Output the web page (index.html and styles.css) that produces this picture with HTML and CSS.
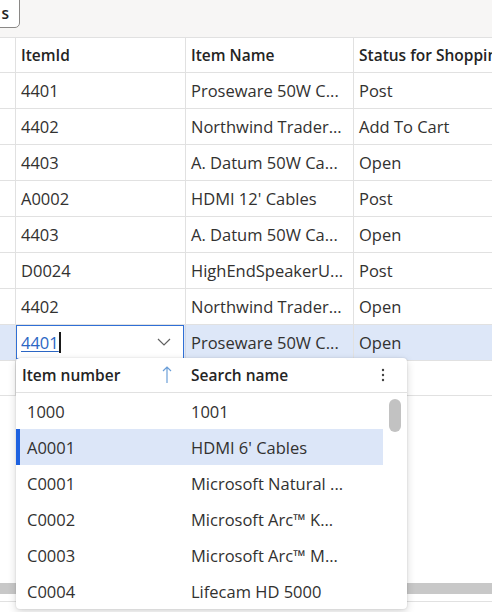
FILE: index.html
```html
<!DOCTYPE html>
<html>
<head>
<meta charset="utf-8">
<link rel="stylesheet" href="styles.css">
</head>
<body>
<div class="page">
  <div class="toolbar">
    <button class="tbtn">s</button>
  </div>
  <div class="grid">
    <div class="row head">
      <div class="c c0"></div>
      <div class="c c1">ItemId</div>
      <div class="c c2">Item Name</div>
      <div class="c c3">Status for Shoppin</div>
    </div>
    <div class="row"><div class="c c0"></div><div class="c c1">4401</div><div class="c c2">Proseware 50W C...</div><div class="c c3">Post</div></div>
    <div class="row"><div class="c c0"></div><div class="c c1">4402</div><div class="c c2">Northwind Trader...</div><div class="c c3">Add To Cart</div></div>
    <div class="row"><div class="c c0"></div><div class="c c1">4403</div><div class="c c2">A. Datum 50W Ca...</div><div class="c c3">Open</div></div>
    <div class="row"><div class="c c0"></div><div class="c c1">A0002</div><div class="c c2">HDMI 12' Cables</div><div class="c c3">Post</div></div>
    <div class="row"><div class="c c0"></div><div class="c c1">4403</div><div class="c c2">A. Datum 50W Ca...</div><div class="c c3">Open</div></div>
    <div class="row"><div class="c c0"></div><div class="c c1">D0024</div><div class="c c2">HighEndSpeakerU...</div><div class="c c3">Post</div></div>
    <div class="row"><div class="c c0"></div><div class="c c1">4402</div><div class="c c2">Northwind Trader...</div><div class="c c3">Open</div></div>
    <div class="row sel">
      <div class="c c0"></div>
      <div class="c c1 editcell">
        <div class="input"><span class="val">4401</span><span class="caret"></span>
          <svg class="chev" width="14" height="8" viewBox="0 0 14 8"><path d="M1 1 L7 7 L13 1" fill="none" stroke="#616161" stroke-width="1.2"/></svg>
        </div>
      </div>
      <div class="c c2">Proseware 50W C...</div>
      <div class="c c3">Open</div>
    </div>
    <div class="row empty"><div class="c c0"></div><div class="c c1"></div><div class="c c2"></div><div class="c c3"></div></div>
  </div>
  <div class="hscroll"></div>
  <div class="footer"></div>

  <div class="dropdown">
    <div class="dhead">
      <div class="dh1">Item number</div>
      <div class="sortarrow">
        <svg width="10" height="18" viewBox="0 0 10 18"><path d="M5 1 V17 M1 5 L5 1 L9 5" fill="none" stroke="#6c9fd8" stroke-width="1.2"/></svg>
      </div>
      <div class="dh2">Search name</div>
      <div class="more">
        <svg width="4" height="14" viewBox="0 0 4 14"><circle cx="2" cy="2" r="1.2" fill="#424242"/><circle cx="2" cy="7" r="1.2" fill="#424242"/><circle cx="2" cy="12" r="1.2" fill="#424242"/></svg>
      </div>
    </div>
    <div class="dbody">
      <div class="dlist">
        <div class="drow"><div class="d1">1000</div><div class="d2">1001</div></div>
        <div class="drow hl"><div class="d1">A0001</div><div class="d2">HDMI 6' Cables</div></div>
        <div class="drow"><div class="d1">C0001</div><div class="d2">Microsoft Natural ...</div></div>
        <div class="drow"><div class="d1">C0002</div><div class="d2">Microsoft Arc™ K...</div></div>
        <div class="drow"><div class="d1">C0003</div><div class="d2">Microsoft Arc™ M...</div></div>
        <div class="drow"><div class="d1">C0004</div><div class="d2">Lifecam HD 5000</div></div>
      </div>
      <div class="vscroll"><div class="thumb"></div></div>
    </div>
  </div>
</div>
</body>
</html>
```

FILE: styles.css
```css
* { box-sizing: border-box; }
html, body { margin: 0; padding: 0; }
body {
  font-family: "Open Sans", "Noto Sans", "Liberation Sans", sans-serif;
  font-size: 16.5px;
  color: #323130;
  background: #ffffff;
}
.page {
  position: relative;
  width: 492px;
  height: 612px;
  overflow: hidden;
  display: flex;
  flex-direction: column;
}
.toolbar {
  height: 37px;
  flex: none;
  background: #f7f6f5;
  display: flex;
  align-items: flex-start;
}
.tbtn {
  margin-left: -20px;
  margin-top: -6px;
  width: 40px;
  height: 34px;
  background: #ffffff;
  border: 1px solid #8a8886;
  border-radius: 5px;
  font-family: inherit;
  font-size: 15.5px;
  font-weight: 600;
  color: #242424;
  text-align: right;
  padding: 4px 10px 0 0;
}
.grid {
  flex: 1;
  border-top: 1px solid #e1e1e1;
  overflow: hidden;
}
.row {
  display: flex;
  height: 36px;
  border-bottom: 1px solid #e1e1e1;
}
.row.head { height: 35px; font-weight: 600; font-size: 15.5px; color: #242424; }
.c {
  border-right: 1px solid #e1e1e1;
  padding: 0 6px;
  display: flex;
  align-items: center;
  white-space: nowrap;
  overflow: hidden;
}
.c0 { width: 16px; flex: none; padding: 0; }
.c1 { width: 170px; flex: none; padding-left: 5px; }
.c2 { width: 168px; flex: none; padding-left: 5px; }
.c3 { flex: 1; border-right: none; padding-left: 5px; }
.row.sel { background: #dde7f8; }
.editcell { padding: 0; align-items: stretch; border-right-color: #d0d8e6; }
.input {
  flex: 1;
  margin: 0 1px 1px 0;
  background: #ffffff;
  border: 1px solid #2f6fd6;
  display: flex;
  align-items: center;
  padding-left: 4px;
  position: relative;
}
.val {
  color: #2b66c4;
  text-decoration: underline;
  text-underline-offset: 2px;
}
.caret {
  display: inline-block;
  width: 2px;
  height: 21px;
  background: #1a1a1a;
  margin-left: 0;
}
.chev { margin-left: auto; margin-right: 12px; }
.row.empty { height: 35px; }
.hscroll {
  flex: none;
  height: 11px;
  background: #c8c8c8;
}
.footer {
  flex: none;
  height: 11px;
  margin-top: 7px;
  border-top: 1px solid #e1e1e1;
  background: #ffffff;
}
.dropdown {
  position: absolute;
  left: 16px;
  top: 358px;
  width: 391px;
  height: 251px;
  background: #ffffff;
  border-radius: 4px;
  box-shadow: 0 0 2px rgba(0,0,0,0.14), 0 3px 8px rgba(0,0,0,0.16);
  overflow: hidden;
  display: flex;
  flex-direction: column;
}
.dhead {
  height: 35px;
  flex: none;
  display: flex;
  align-items: center;
  border-bottom: 1px solid #e1e1e1;
  font-weight: 600;
  font-size: 15.5px;
  color: #242424;
}
.dh1 { width: 146px; padding-left: 6px; }
.sortarrow { width: 29px; display: flex; align-items: center; }
.dh2 { flex: 1; }
.more { width: 26px; display: flex; align-items: center; }
.dbody { flex: 1; display: flex; overflow: hidden; }
.dlist { width: 367px; flex: none; }
.drow {
  height: 36px;
  display: flex;
  align-items: center;
  border-left: 4px solid transparent;
}
.drow.hl { background: #dce6f8; border-left-color: #1e62e0; }
.d1 { width: 171px; padding-left: 7px; }
.d2 { flex: 1; white-space: nowrap; overflow: hidden; }
.vscroll { flex: 1; position: relative; }
.thumb {
  position: absolute;
  left: 6px;
  top: 6px;
  width: 12px;
  height: 33px;
  border-radius: 6px;
  background: #c2c2c2;
}
```
